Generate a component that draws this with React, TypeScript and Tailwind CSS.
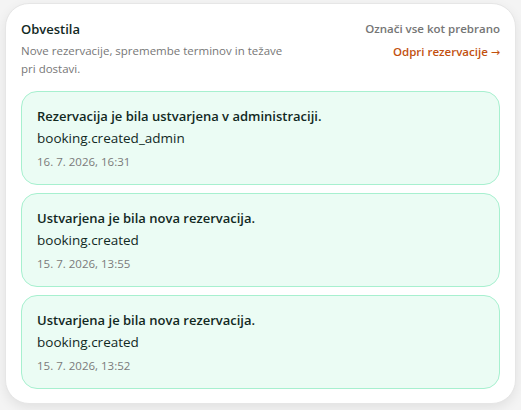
import React from "react";

const items = [
  { title: "Rezervacija je bila ustvarjena v administraciji.", code: "booking.created_admin", date: "16. 7. 2026, 16:31" },
  { title: "Ustvarjena je bila nova rezervacija.", code: "booking.created", date: "15. 7. 2026, 13:55" },
  { title: "Ustvarjena je bila nova rezervacija.", code: "booking.created", date: "15. 7. 2026, 13:52" },
];

export default function App() {
  return (
    <div
      className="w-[521px] h-[410px] bg-[#f4f4f4] overflow-hidden pt-[3px] pl-[5px]"
      style={{ fontFamily: '"Open Sans", "Noto Sans", sans-serif' }}
    >
      <div className="w-[511px] h-[401px] rounded-[24px] border border-[#e6e6e6] bg-white shadow-[0_4px_12px_rgba(0,0,0,0.08)] px-[15px] pt-[16px]">
        <div className="flex justify-between items-start">
          <div>
            <h2 className="text-[13px] leading-[18px] font-semibold text-[#12291f]">Obvestila</h2>
            <p className="mt-[4px] w-[270px] text-[11.5px] leading-[18px] text-[#777]">
              Nove rezervacije, spremembe terminov in težave pri dostavi.
            </p>
          </div>
          <div className="flex flex-col items-end">
            <button className="text-[11.5px] leading-[18px] font-semibold text-[#757575]">Označi vse kot prebrano</button>
            <a className="mt-[5px] text-[11.5px] leading-[18px] font-semibold text-[#c2510f]">
              Odpri rezervacije{" "}
              <span style={{ fontFamily: '"DejaVu Sans", sans-serif' }} className="text-[11px] font-normal">→</span>
            </a>
          </div>
        </div>
        <div className="mt-[13px] flex flex-col gap-2">
          {items.map((it, i) => (
            <div key={i} className="h-[94px] rounded-[16px] border border-[#a7f0cf] bg-[#ebfcf4] px-[15px] pt-[15px]">
              <div className="text-[13px] leading-[18px] font-semibold text-[#12291f]">{it.title}</div>
              <div className="mt-[4px] text-[13.5px] leading-[18px] text-[#12291f]">{it.code}</div>
              <div className="mt-[6px] text-[11.5px] leading-[18px] text-[#7a7a7a]">{it.date}</div>
            </div>
          ))}
        </div>
      </div>
    </div>
  );
}
